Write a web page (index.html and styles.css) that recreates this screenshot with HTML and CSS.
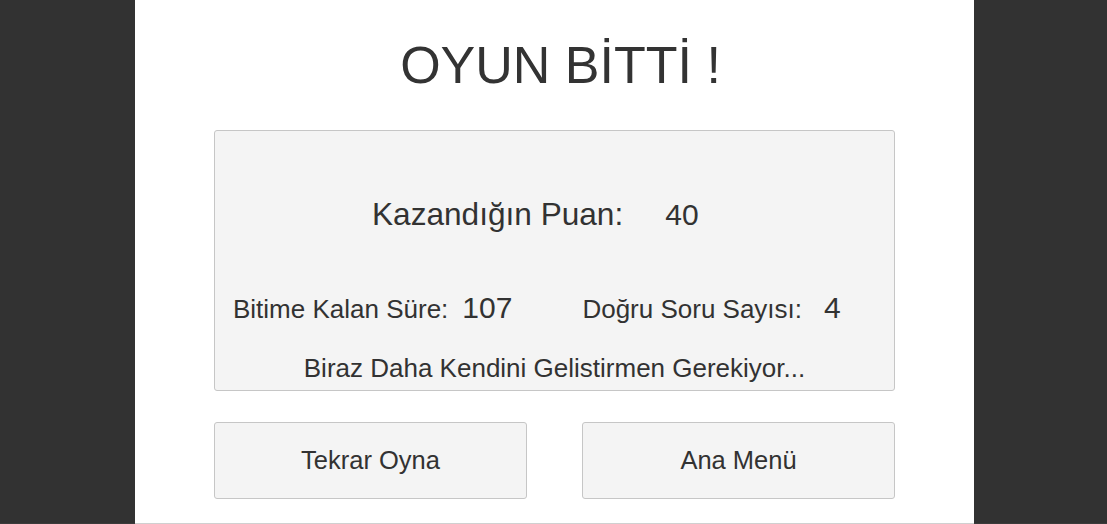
FILE: index.html
```html
<!DOCTYPE html>
<html lang="tr">
<head>
<meta charset="utf-8">
<title>Oyun Bitti</title>
<link rel="stylesheet" href="styles.css">
</head>
<body>
<div class="screen">
  <main class="panel">
    <h1 class="title">OYUN BİTTİ !</h1>
    <section class="result-box">
      <div class="score-row">
        <span class="score-label">Kazandığın Puan:</span>
        <span class="score-value">40</span>
      </div>
      <div class="stats-row">
        <span class="stat-label">Bitime Kalan Süre:</span>
        <span class="stat-value time-value">107</span>
        <span class="stat-label correct-label">Doğru Soru Sayısı:</span>
        <span class="stat-value correct-value">4</span>
      </div>
      <p class="message">Biraz Daha Kendini Gelistirmen Gerekiyor...</p>
    </section>
    <div class="actions">
      <button class="btn">Tekrar Oyna</button>
      <button class="btn">Ana Menü</button>
    </div>
  </main>
</div>
</body>
</html>
```

FILE: styles.css
```css
html, body {
  margin: 0;
  padding: 0;
}

body {
  background: #323232;
  width: 1107px;
  height: 524px;
  overflow: hidden;
  font-family: "Liberation Sans", Arial, sans-serif;
  color: #323232;
}

.screen {
  height: 524px;
  box-sizing: border-box;
  padding-left: 135px;
  border-bottom: 1px solid #3b3b3b;
}

.panel {
  width: 839px;
  height: 523px;
  background: #ffffff;
  box-shadow: 0 1px 0 #d0d0d0;
  display: flex;
  flex-direction: column;
  align-items: center;
}

.title {
  margin: 35px 0 0;
  padding-left: 12px;
  font-size: 52px;
  line-height: 60px;
  font-weight: normal;
  color: #333333;
}

.result-box {
  width: 681px;
  height: 261px;
  margin-top: 35px;
  box-sizing: border-box;
  background: #f4f4f4;
  border: 1px solid #c6c6c6;
  border-radius: 3px;
  padding-top: 63px;
}

.score-row {
  display: flex;
  align-items: baseline;
  padding-left: 157px;
  line-height: 40px;
}

.score-label {
  font-size: 31.6px;
}

.score-value {
  font-size: 30px;
  margin-left: 42px;
}

.stats-row {
  display: flex;
  align-items: baseline;
  margin-top: 55px;
  padding-left: 18px;
  line-height: 36px;
}

.stat-label {
  font-size: 26px;
}

.stat-value {
  font-size: 30px;
}

.time-value {
  margin-left: 14px;
}

.correct-label {
  margin-left: 70px;
}

.correct-value {
  margin-left: 22px;
}

.message {
  margin: 23px 0 0;
  text-align: center;
  font-size: 26px;
  line-height: 36px;
}

.actions {
  width: 681px;
  margin-top: 31px;
  display: flex;
  justify-content: space-between;
}

.btn {
  width: 313px;
  height: 77px;
  box-sizing: border-box;
  background: #f4f4f4;
  border: 1px solid #c6c6c6;
  border-radius: 3px;
  font-family: "Liberation Sans", Arial, sans-serif;
  font-size: 25.5px;
  color: #323232;
  padding: 0;
}
```
